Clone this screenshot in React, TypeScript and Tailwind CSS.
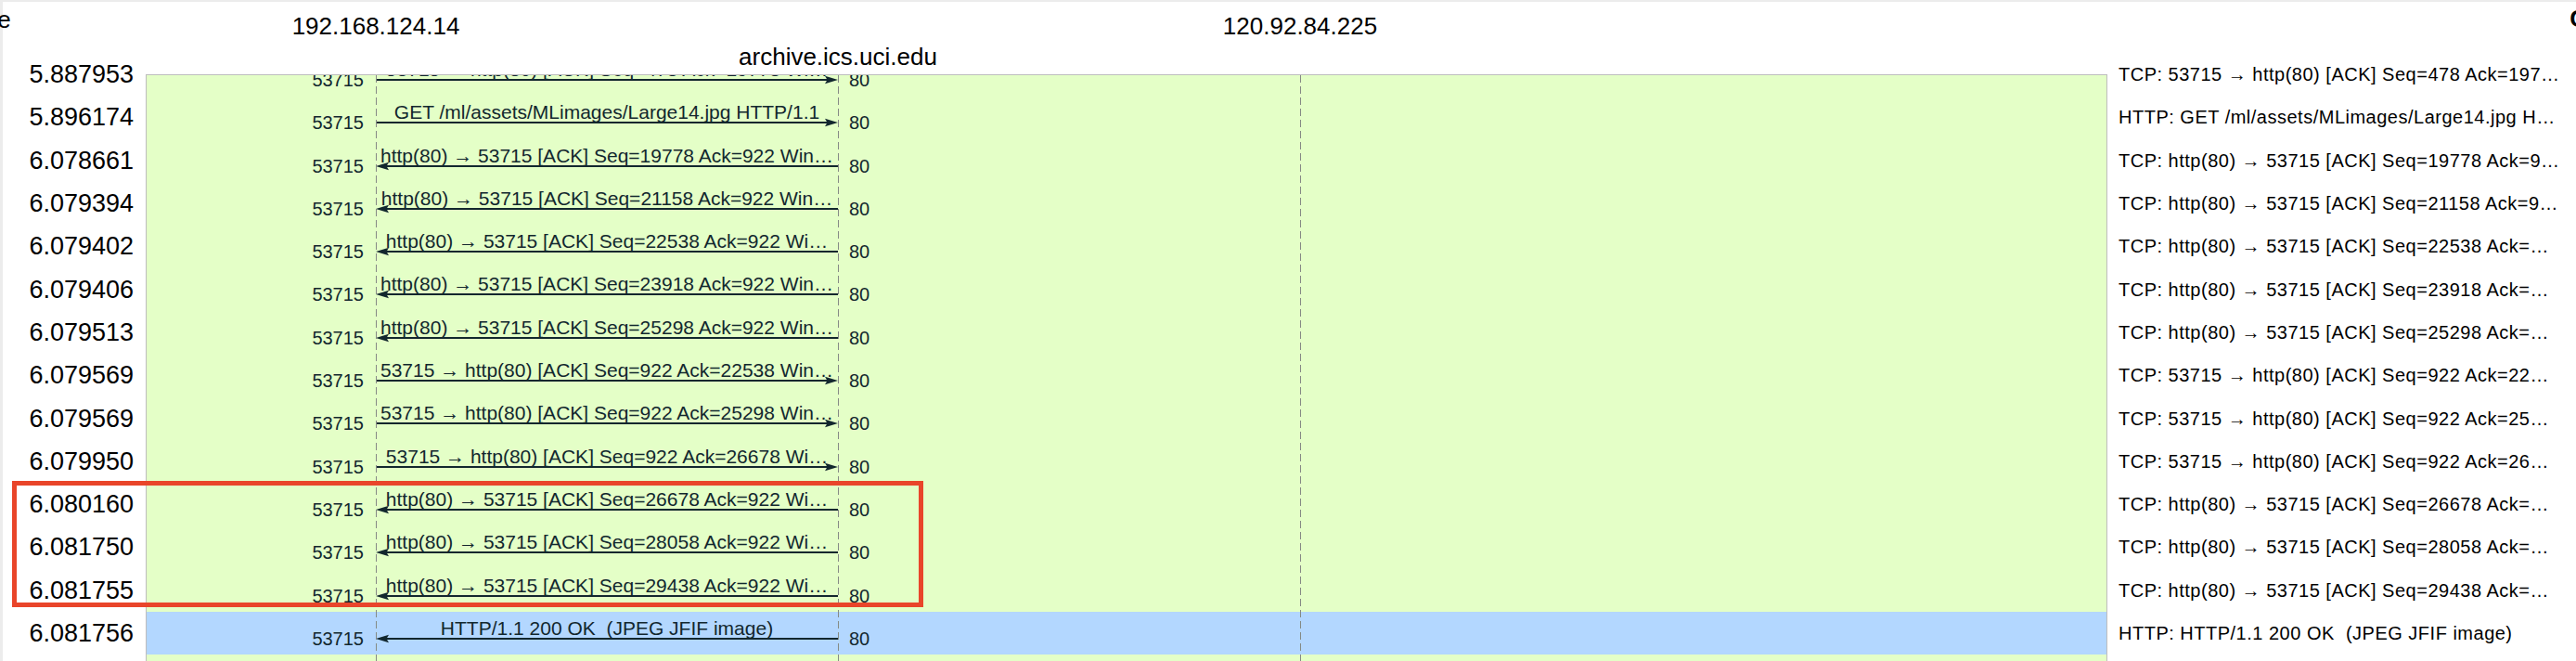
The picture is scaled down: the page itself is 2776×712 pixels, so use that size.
import React from 'react';

type Row = {
  time: string;
  dir: 'r' | 'l';
  msg: string;
  note: string;
  selected?: boolean;
};

const rows: Row[] = [
  { time: '5.887953', dir: 'r', msg: '53715 → http(80) [ACK] Seq=478 Ack=19778 Wi…', note: 'TCP: 53715 → http(80) [ACK] Seq=478 Ack=197…' },
  { time: '5.896174', dir: 'r', msg: 'GET /ml/assets/MLimages/Large14.jpg HTTP/1.1', note: 'HTTP: GET /ml/assets/MLimages/Large14.jpg H…' },
  { time: '6.078661', dir: 'l', msg: 'http(80) → 53715 [ACK] Seq=19778 Ack=922 Win…', note: 'TCP: http(80) → 53715 [ACK] Seq=19778 Ack=9…' },
  { time: '6.079394', dir: 'l', msg: 'http(80) → 53715 [ACK] Seq=21158 Ack=922 Win…', note: 'TCP: http(80) → 53715 [ACK] Seq=21158 Ack=9…' },
  { time: '6.079402', dir: 'l', msg: 'http(80) → 53715 [ACK] Seq=22538 Ack=922 Wi…', note: 'TCP: http(80) → 53715 [ACK] Seq=22538 Ack=…' },
  { time: '6.079406', dir: 'l', msg: 'http(80) → 53715 [ACK] Seq=23918 Ack=922 Win…', note: 'TCP: http(80) → 53715 [ACK] Seq=23918 Ack=…' },
  { time: '6.079513', dir: 'l', msg: 'http(80) → 53715 [ACK] Seq=25298 Ack=922 Win…', note: 'TCP: http(80) → 53715 [ACK] Seq=25298 Ack=…' },
  { time: '6.079569', dir: 'r', msg: '53715 → http(80) [ACK] Seq=922 Ack=22538 Win…', note: 'TCP: 53715 → http(80) [ACK] Seq=922 Ack=22…' },
  { time: '6.079569', dir: 'r', msg: '53715 → http(80) [ACK] Seq=922 Ack=25298 Win…', note: 'TCP: 53715 → http(80) [ACK] Seq=922 Ack=25…' },
  { time: '6.079950', dir: 'r', msg: '53715 → http(80) [ACK] Seq=922 Ack=26678 Wi…', note: 'TCP: 53715 → http(80) [ACK] Seq=922 Ack=26…' },
  { time: '6.080160', dir: 'l', msg: 'http(80) → 53715 [ACK] Seq=26678 Ack=922 Wi…', note: 'TCP: http(80) → 53715 [ACK] Seq=26678 Ack=…' },
  { time: '6.081750', dir: 'l', msg: 'http(80) → 53715 [ACK] Seq=28058 Ack=922 Wi…', note: 'TCP: http(80) → 53715 [ACK] Seq=28058 Ack=…' },
  { time: '6.081755', dir: 'l', msg: 'http(80) → 53715 [ACK] Seq=29438 Ack=922 Wi…', note: 'TCP: http(80) → 53715 [ACK] Seq=29438 Ack=…' },
  { time: '6.081756', dir: 'l', msg: 'HTTP/1.1 200 OK  (JPEG JFIF image)', note: 'HTTP: HTTP/1.1 200 OK  (JPEG JFIF image)', selected: true },
];

const Arrow = ({ dir }: { dir: 'r' | 'l' }) => (
  <svg width="498" height="10" viewBox="0 0 498 10" className="block -mt-[4px]">
    <line x1={dir === 'l' ? 4 : 0} y1="5" x2={dir === 'r' ? 494 : 498} y2="5" stroke="#12272e" strokeWidth="2" />
    {dir === 'r' ? (
      <polygon points="498,5 484,0.8 486.5,5 484,9.2" fill="#12272e" />
    ) : (
      <polygon points="0,5 14,0.8 11.5,5 14,9.2" fill="#12272e" />
    )}
  </svg>
);

const lifeline =
  "absolute top-0 bottom-0 w-px bg-[image:repeating-linear-gradient(to_bottom,#858a85_0px,#858a85_8px,transparent_8px,transparent_12px)]";

export default function App() {
  return (
    <div className="relative w-[2776px] h-[712px] overflow-hidden bg-[#ececec] font-['Liberation_Sans',Arial,sans-serif] text-black">
      <div className="ml-[3px] mt-[2px] h-[710px] bg-white flex">
        {/* time column */}
        <div className="w-[154px] shrink-0 flex flex-col">
          <div className="h-[55px] shrink-0 pt-[4px] text-[26px] leading-[30px] whitespace-nowrap -ml-[48px]">Time</div>
          {rows.map((r, i) => (
            <div key={i} className="h-[46.3px] shrink-0 flex items-center justify-end pr-[13px] text-[27px] leading-[30px]">
              {r.time}
            </div>
          ))}
        </div>

        {/* flow diagram */}
        <div className="w-[2114px] shrink-0 flex flex-col">
          <div className="h-[78px] shrink-0 pt-[11px]">
            <div className="grid grid-cols-[498px_498px_498px] gap-y-[3px] -ml-px text-[26px] leading-[30px] text-center whitespace-nowrap">
              <div>192.168.124.14</div>
              <div />
              <div>120.92.84.225</div>
              <div className="col-start-2">archive.ics.uci.edu</div>
            </div>
          </div>
          <div className="relative flex-1 overflow-hidden border-t border-l border-r border-[#bdbdbd] bg-[#e4ffc7] text-[#12272e]">
            <div className="-mt-[24px] flex flex-col">
              {rows.map((r, i) => (
                <div key={i} className={`h-[46.3px] shrink-0 flex ${r.selected ? 'bg-[#b3d7ff]' : 'bg-[#e4ffc7]'}`}>
                  <div className="w-[247px] shrink-0 pt-[19px] pr-[13px] text-right text-[20px] leading-[20px]">53715</div>
                  <div className="w-[498px] shrink-0 flex flex-col">
                    <div className="pt-[7px] text-[21px] leading-[21px] text-center whitespace-pre">{r.msg}</div>
                    <Arrow dir={r.dir} />
                  </div>
                  <div className="pt-[19px] pl-[12px] text-[20px] leading-[20px]">80</div>
                </div>
              ))}
            </div>
            <div className={`${lifeline} left-[247px]`} />
            <div className={`${lifeline} left-[745px]`} />
            <div className={`${lifeline} left-[1243px]`} />
          </div>
        </div>

        {/* comments */}
        <div className="flex-1 flex flex-col min-w-0">
          <div className="h-[55px] shrink-0 pt-[3px] flex justify-end">
            <span className="text-[26px] leading-[30px] font-bold -mr-[12px]">C</span>
          </div>
          {rows.map((r, i) => (
            <div key={i} className="h-[46.3px] shrink-0 flex items-center pl-[12px] text-[20px] tracking-[0.5px] whitespace-pre">
              {r.note}
            </div>
          ))}
        </div>
      </div>

      {/* annotation */}
      <div className="absolute left-[13px] top-[518px] w-[982px] h-[136px] border-[5px] border-[#e9452a]" />
    </div>
  );
}
